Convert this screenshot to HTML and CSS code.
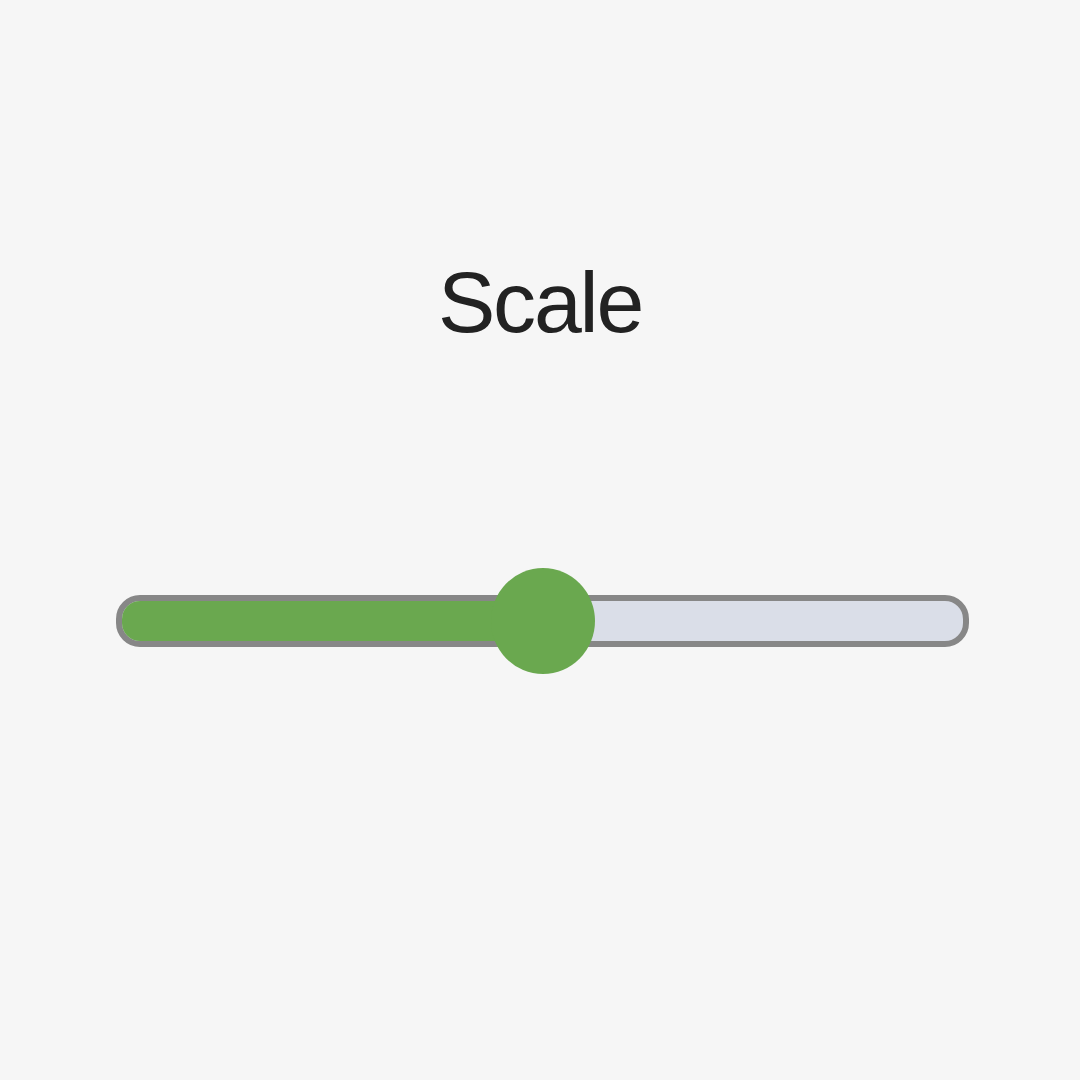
FILE: index.html
```html
<!DOCTYPE html>
<html>
<head>
<meta charset="utf-8">
<link rel="stylesheet" href="styles.css">
</head>
<body>
<main class="page">
  <h1 class="title">Scale</h1>
  <div class="slider">
    <div class="track">
      <div class="fill" style="width: 50%"></div>
    </div>
    <div class="thumb" style="left: 427px"></div>
  </div>
</main>
</body>
</html>
```

FILE: styles.css
```css
html, body {
  margin: 0;
  padding: 0;
  background: #f6f6f6;
}
.page {
  width: 1080px;
  height: 1080px;
  display: flex;
  flex-direction: column;
  align-items: center;
}
.title {
  margin: 254px 0 0 0;
  font-family: "Liberation Sans", Arial, sans-serif;
  font-weight: 400;
  font-size: 86px;
  line-height: 96px;
  letter-spacing: -2.2px;
  color: #222222;
}
.slider {
  position: relative;
  margin-top: 245px;
  margin-left: 5px;
  width: 853px;
  height: 52px;
}
.track {
  box-sizing: border-box;
  width: 100%;
  height: 52px;
  border: 6px solid #878787;
  border-radius: 24px;
  background: #dadee8;
  overflow: hidden;
}
.fill {
  height: 100%;
  background: #6aa84f;
}
.thumb {
  position: absolute;
  top: -27px;
  width: 104px;
  height: 106px;
  margin-left: -52px;
  border-radius: 50%;
  background: #6aa84f;
}
```
